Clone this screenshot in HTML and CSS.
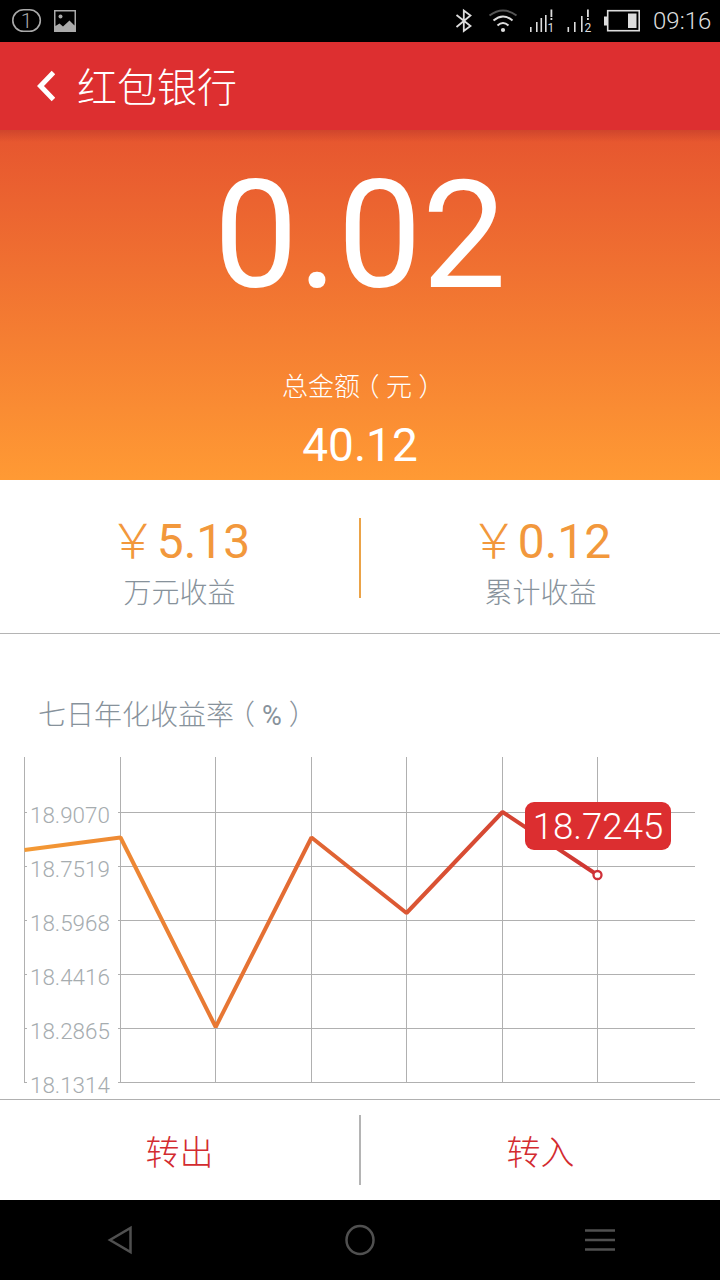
FILE: index.html
```html
<!DOCTYPE html>
<html lang="zh-CN">
<head>
<meta charset="utf-8">
<title>红包银行</title>
<link rel="stylesheet" href="styles.css">
</head>
<body>
<div class="screen">
  <div class="status-bar">
    <svg class="status-left" width="80" height="42" viewBox="0 0 80 42">
      <rect x="12.8" y="9.8" width="27.5" height="21.5" rx="10.7" fill="none" stroke="#aaa" stroke-width="1.6"/>
      <text class="badge-number" x="26.5" y="27.5">1</text>
      <path fill="#aaa" fill-rule="evenodd" d="M54 10h22v22H54zM55.500 11.500v14.500l4-2.500 3.500 3 6.500-6 5 5V11.500z"/>
      <circle cx="60.500" cy="16.500" r="2" fill="#aaa"/>
    </svg>
    <svg class="status-right" width="210" height="42" viewBox="440 0 210 42">
      <path d="M456.500 15l14 11-6.700 5V10.500l6.700 5-14 11.500" fill="none" stroke="#ddd" stroke-width="1.8"/>
      <g fill="none" stroke="#ddd" stroke-width="2">
        <path d="M489.500 15.500Q503 5.500 516.500 15.500" stroke="#555"/>
        <path d="M493.500 20.500Q503 12.500 512.500 20.500"/>
        <path d="M497.500 25.500Q503 20.500 508.500 25.500"/>
      </g>
      <circle cx="503" cy="30" r="2.100" fill="#ddd"/>
      <g fill="#ddd">
        <path d="M530 27h1.600v5H530zM536 22h1.600v10H536zM540.500 18h1.600v14h-1.600zM545 15h1.600v17H545zM550.500 9.500h1.800V17h-1.800zM550.500 18h1.800v2h-1.800z"/>
        <path d="M567.500 27h1.600v5h-1.600zM574 22h1.600v10H574zM581 16h1.600v16H581zM587 9.500h1.800V17H587zM587 18h1.800v2H587z"/>
      </g>
      <text class="sim-number" x="547.500" y="32">1</text>
      <text class="sim-number" x="584.500" y="32">2</text>
      <rect x="607.700" y="10.700" width="31.500" height="20" fill="none" stroke="#ddd" stroke-width="1.600"/>
      <path d="M604 16.500h3v9h-3zM628 13.500h8.500V28H628z" fill="#ddd"/>
    </svg>
    <span class="clock">09:16</span>
  </div>

  <div class="title-bar">
    <svg class="back" width="20" height="32" viewBox="0 0 20 32"><path d="M18.500 2.500L5.500 16l13 13.500" fill="none" stroke="#fff" stroke-width="5"/></svg>
    <h1 class="title">红包银行</h1>
  </div>

  <section class="hero">
    <div class="hero-amount">0.02</div>
    <div class="hero-label">总金额<span class="paren">（</span>元<span class="paren">）</span></div>
    <div class="hero-total">40.12</div>
  </section>

  <section class="stats">
    <div class="stat"><div class="stat-value"><span class="currency">￥</span>5.13</div><div class="stat-label">万元收益</div></div>
    <div class="stats-divider"></div>
    <div class="stat"><div class="stat-value"><span class="currency">￥</span>0.12</div><div class="stat-label">累计收益</div></div>
  </section>

  <section class="rate">
    <h2 class="rate-title">七日年化收益率<span class="paren">（</span><span class="percent">%</span><span class="paren">）</span></h2>
    <svg class="chart" width="720" height="349" viewBox="0 750 720 349">
      <defs>
        <linearGradient id="trend" gradientUnits="userSpaceOnUse" x1="24" y1="0" x2="597" y2="0">
          <stop offset="0" stop-color="#f49a34"/>
          <stop offset="1" stop-color="#cf3533"/>
        </linearGradient>
      </defs>
      <g class="grid">
        <path d="M24.500 757V1083M120.500 757V1083M215.500 757V1083M311.500 757V1083M406.500 757V1083M502.500 757V1083M597.500 757V1083"/>
        <path d="M24 812.500h3M118 812.500H695M24 866.500h3M118 866.500H695M24 920.500h3M118 920.500H695M24 974.500h3M118 974.500H695M24 1028.500h3M118 1028.500H695M24 1082.500h3M118 1082.500H695"/>
      </g>
      <g class="axis">
        <text x="30" y="823">18.9070</text>
        <text x="30" y="877">18.7519</text>
        <text x="30" y="931">18.5968</text>
        <text x="30" y="985">18.4416</text>
        <text x="30" y="1039">18.2865</text>
        <text x="30" y="1093">18.1314</text>
      </g>
      <polyline points="24.500,850 120.500,837.500 215.700,1027 311.500,837.500 406.500,913 502.500,812 597.500,875" fill="none" stroke="url(#trend)" stroke-width="4" stroke-linejoin="bevel"/>
      <circle cx="597.500" cy="875" r="4" fill="#fff" stroke="#cf3038" stroke-width="2.300"/>
      <rect x="525" y="802" width="146" height="48" rx="9" fill="#dc2e30"/>
      <text class="tip" x="598" y="839">18.7245</text>
    </svg>
  </section>

  <div class="actions">
    <div class="action">转出</div>
    <div class="actions-divider"></div>
    <div class="action">转入</div>
  </div>

  <div class="nav-bar">
    <svg width="32" height="32" viewBox="0 0 32 32"><path d="M26.500 4v24L6 16z"/></svg>
    <svg width="32" height="32" viewBox="0 0 32 32"><ellipse cx="16" cy="16" rx="13.500" ry="14"/></svg>
    <svg width="32" height="32" viewBox="0 0 32 32"><path d="M1 6.500h30M1 16h30M1 25.500h30"/></svg>
  </div>
</div>
</body>
</html>
```
FILE: styles.css
```css
* { box-sizing: border-box; }

body {
  margin: 0;
  background: #000;
  font-family: Roboto, "Noto Sans CJK SC", sans-serif;
  font-weight: 300;
}

.screen {
  width: 720px;
  height: 1280px;
  display: flex;
  flex-direction: column;
  overflow: hidden;
  background: #fff;
}

.status-bar {
  height: 42px;
  display: flex;
  align-items: center;
  background: #000;
}

.status-left { margin-right: auto; }

.badge-number {
  font-size: 21px;
  text-anchor: middle;
  fill: #aaa;
}

.sim-number {
  font-size: 12px;
  font-weight: 400;
  fill: #ddd;
}

.clock {
  width: 70px;
  padding-left: 3px;
  font-size: 24px;
  line-height: 42px;
  color: #ddd;
}

.title-bar {
  height: 88px;
  display: flex;
  align-items: center;
  padding-left: 35px;
  background: #dd2f30;
}

.title {
  margin: 0 0 0 22px;
  padding-top: 6px;
  font-size: 40px;
  line-height: 60px;
  font-weight: 300;
  color: #fff;
}

.hero {
  height: 350px;
  display: flex;
  flex-direction: column;
  align-items: center;
  color: #fff;
  background:
    linear-gradient(#c03b2b99, #c03b2b00) 0 0 / 100% 12px no-repeat,
    linear-gradient(#e6552f, #ff9a34);
}

.hero-amount {
  margin-top: 18px;
  font-size: 150px;
  line-height: 176px;
  font-weight: 400;
}

.hero-label {
  margin-top: 43px;
  font-size: 26px;
  line-height: 40px;
}

.hero-total {
  margin-top: 10px;
  font-size: 46px;
  line-height: 56px;
  font-weight: 400;
}

.paren {
  display: inline-block;
  width: 1em;
  text-align: center;
  font-feature-settings: "halt";
}

.stats {
  height: 154px;
  display: flex;
  padding-top: 34px;
  border-bottom: 1px solid #b4b4b4;
}

.stat {
  flex: 1;
  text-align: center;
}

.stat-value {
  font-size: 48px;
  line-height: 56px;
  font-weight: 400;
  color: #f2983c;
}

.currency { font-weight: 300; }

.stat-label {
  padding-top: 2px;
  font-size: 28px;
  line-height: 44px;
  color: #87929b;
}

.stats-divider {
  width: 2px;
  height: 80px;
  margin-top: 4px;
  background: #eba348;
}

.rate {
  height: 465px;
  padding-top: 62px;
}

.rate-title {
  height: 40px;
  margin: 0 0 14px 38px;
  font-size: 28px;
  line-height: 40px;
  font-weight: 300;
  color: #87929b;
}

.percent { font-weight: 400; font-size: 27px; }

.chart { display: block; }

.grid {
  fill: none;
  stroke: #b0b0b0;
  stroke-width: 1;
}

.axis {
  font-size: 22.4px;
  fill: #a6acaf;
}

.tip {
  font-size: 36.6px;
  text-anchor: middle;
  fill: #fff;
}

.actions {
  height: 101px;
  display: flex;
  align-items: center;
  border-top: 1px solid #b0b0b0;
}

.action {
  flex: 1;
  padding-top: 5px;
  font-size: 34px;
  line-height: 50px;
  text-align: center;
  color: #d32b2f;
}

.actions-divider {
  width: 2px;
  height: 70px;
  background: #b4b4b4;
}

.nav-bar {
  height: 80px;
  display: flex;
  align-items: center;
  justify-content: space-between;
  padding: 0 104px;
  background: #000;
}

.nav-bar svg {
  fill: none;
  stroke: #505050;
  stroke-width: 2.5;
}
```
